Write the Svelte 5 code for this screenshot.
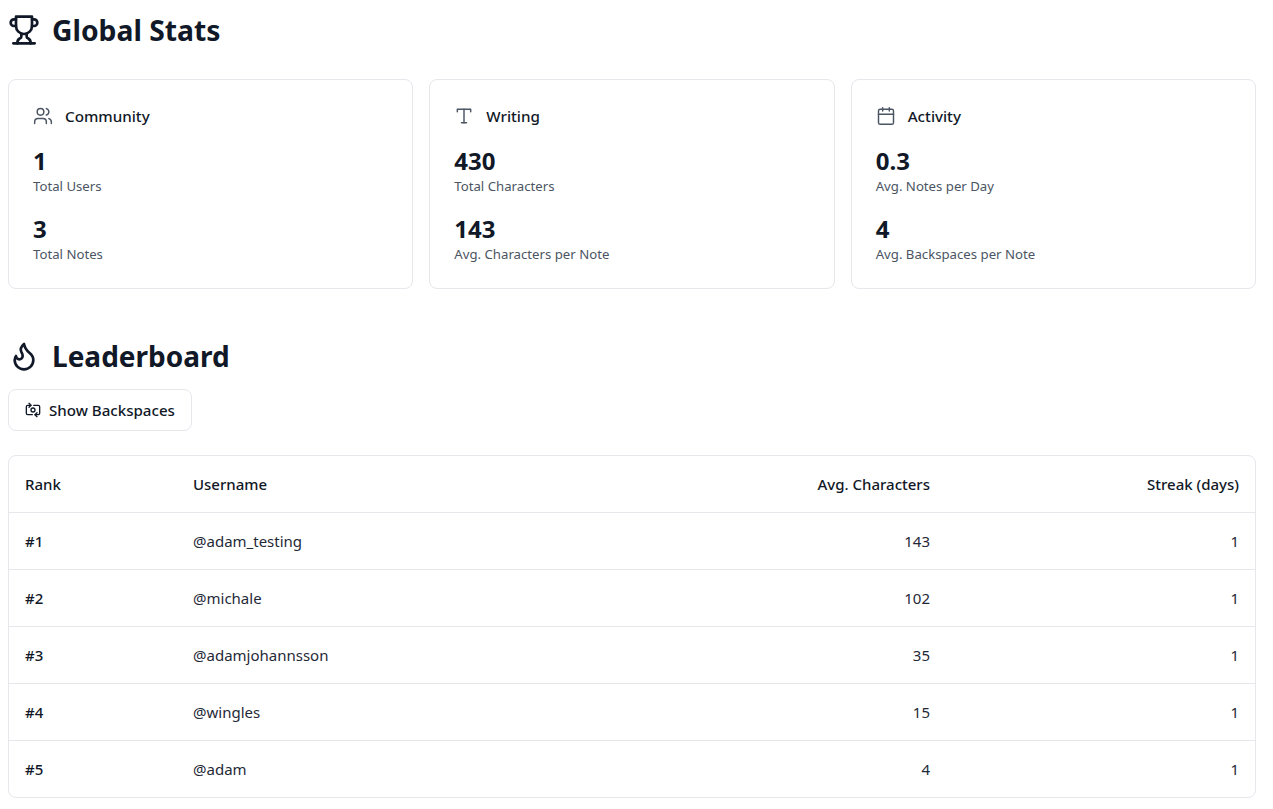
<script>
  const cards = [
    { title: 'Community', icon: 'users', stats: [['1', 'Total Users'], ['3', 'Total Notes']] },
    { title: 'Writing', icon: 'type', stats: [['430', 'Total Characters'], ['143', 'Avg. Characters per Note']] },
    { title: 'Activity', icon: 'calendar', stats: [['0.3', 'Avg. Notes per Day'], ['4', 'Avg. Backspaces per Note']] }
  ];
  const rows = [
    ['#1', '@adam_testing', '143', '1'],
    ['#2', '@michale', '102', '1'],
    ['#3', '@adamjohannsson', '35', '1'],
    ['#4', '@wingles', '15', '1'],
    ['#5', '@adam', '4', '1']
  ];
</script>

<main class="page">
  <h1 class="heading first">
    <svg class="head-icon" viewBox="0 0 24 24"><path d="M6 9H4.5a2.5 2.5 0 0 1 0-5H6" /><path d="M18 9h1.5a2.5 2.5 0 0 0 0-5H18" /><path d="M4 22h16" /><path d="M10 14.66V17c0 .55-.47.98-.97 1.21C7.85 18.75 7 20.24 7 22" /><path d="M14 14.66V17c0 .55.47.98.97 1.21C16.15 18.75 17 20.24 17 22" /><path d="M18 2H6v7a6 6 0 0 0 12 0V2Z" /></svg>
    Global Stats
  </h1>

  <section class="cards">
    {#each cards as card}
      <article class="card">
        <div class="card-title">
          {#if card.icon === 'users'}
            <svg class="card-icon" viewBox="0 0 24 24"><path d="M16 21v-2a4 4 0 0 0-4-4H6a4 4 0 0 0-4 4v2" /><circle cx="9" cy="7" r="4" /><path d="M22 21v-2a4 4 0 0 0-3-3.87" /><path d="M16 3.13a4 4 0 0 1 0 7.75" /></svg>
          {:else if card.icon === 'type'}
            <svg class="card-icon" viewBox="0 0 24 24"><path d="M4 7V4h16v3" /><path d="M9 20h6" /><path d="M12 4v16" /></svg>
          {:else}
            <svg class="card-icon" viewBox="0 0 24 24"><path d="M8 2v4" /><path d="M16 2v4" /><rect x="3" y="4" width="18" height="18" rx="2" /><path d="M3 10h18" /></svg>
          {/if}
          <span>{card.title}</span>
        </div>
        {#each card.stats as s}
          <div class="stat">
            <div class="value">{s[0]}</div>
            <div class="label">{s[1]}</div>
          </div>
        {/each}
      </article>
    {/each}
  </section>

  <h2 class="heading second">
    <svg class="head-icon" viewBox="0 0 24 24"><path d="M8.5 14.5A2.5 2.5 0 0 0 11 12c0-1.38-.5-2-1-3-1.072-2.143-.224-4.054 2-6 .5 2.5 2 4.9 4 6.5 2 1.6 3 3.5 3 5.5a7 7 0 1 1-14 0c0-1.153.433-2.294 1-3a2.5 2.5 0 0 0 2.5 2.5z" /></svg>
    Leaderboard
  </h2>

  <button class="toggle">
    <svg class="btn-icon" viewBox="0 0 24 24"><path d="M11 19H4a2 2 0 0 1-2-2V7a2 2 0 0 1 2-2h5" /><path d="M13 5h7a2 2 0 0 1 2 2v10a2 2 0 0 1-2 2h-5" /><circle cx="12" cy="12" r="3" /><path d="m18 22-3-3 3-3" /><path d="m6 2 3 3-3 3" /></svg>
    Show Backspaces
  </button>

  <div class="table-wrap">
    <table>
      <thead>
        <tr><th class="rank">Rank</th><th>Username</th><th class="num">Avg. Characters</th><th class="num">Streak (days)</th></tr>
      </thead>
      <tbody>
        {#each rows as r}
          <tr><td class="rank-cell">{r[0]}</td><td>{r[1]}</td><td class="num">{r[2]}</td><td class="num">{r[3]}</td></tr>
        {/each}
      </tbody>
    </table>
  </div>
</main>

<style>
  :global(body) { margin: 0; background: #fff; }
  .page {
    box-sizing: border-box;
    width: 1264px;
    padding: 8px 8px 0;
    font-family: "Noto Sans", sans-serif;
    color: #111827;
  }
  svg { fill: none; stroke: currentColor; stroke-linecap: round; stroke-linejoin: round; flex: none; }
  .heading { display: flex; align-items: center; gap: 12px; margin: 0; font-weight: 700; font-size: 28.3px; line-height: 44px; }
  .first { margin-bottom: 27px; }
  .second { margin-top: 45px; margin-bottom: 11px; font-size: 28px; }
  .head-icon { width: 32px; height: 32px; stroke-width: 2; }
  .cards { display: grid; grid-template-columns: repeat(3, 1fr); gap: 16px; }
  .card { border: 1px solid #e5e7eb; border-radius: 8px; padding: 24px; height: 210px; box-sizing: border-box; }
  .card-title { display: flex; align-items: center; gap: 12px; font-size: 15.2px; font-weight: 500; line-height: 24px; margin-bottom: 17px; }
  .card-icon { width: 20px; height: 20px; stroke-width: 1.75; color: #4b5563; }
  .stat { height: 68px; }
  .value { font-size: 24px; font-weight: 700; line-height: 32px; }
  .label { font-size: 13.2px; line-height: 19px; color: #4b5563; }
  .toggle { display: flex; align-items: center; gap: 8px; height: 42px; padding: 0 16px; background: #fff; border: 1px solid #e5e7eb; border-radius: 8px; font: 500 15.1px "Noto Sans", sans-serif; color: #111827; }
  .btn-icon { width: 16px; height: 16px; stroke-width: 2; }
  .table-wrap { margin-top: 24px; border: 1px solid #e5e7eb; border-radius: 8px; overflow: hidden; }
  table { width: 100%; border-collapse: collapse; font-size: 15px; table-layout: fixed; }
  th, td { height: 56px; padding: 0 16px; text-align: left; box-sizing: border-box; }
  th { font-weight: 500; }
  td { font-weight: 400; color: #1f2937; border-top: 1px solid #e5e7eb; height: 57px; }
  .rank { width: 168px; }
  .rank-cell { font-weight: 500; color: #111827; }
  .num { text-align: right; }
  th.num:last-child { width: 309px; }
</style>
